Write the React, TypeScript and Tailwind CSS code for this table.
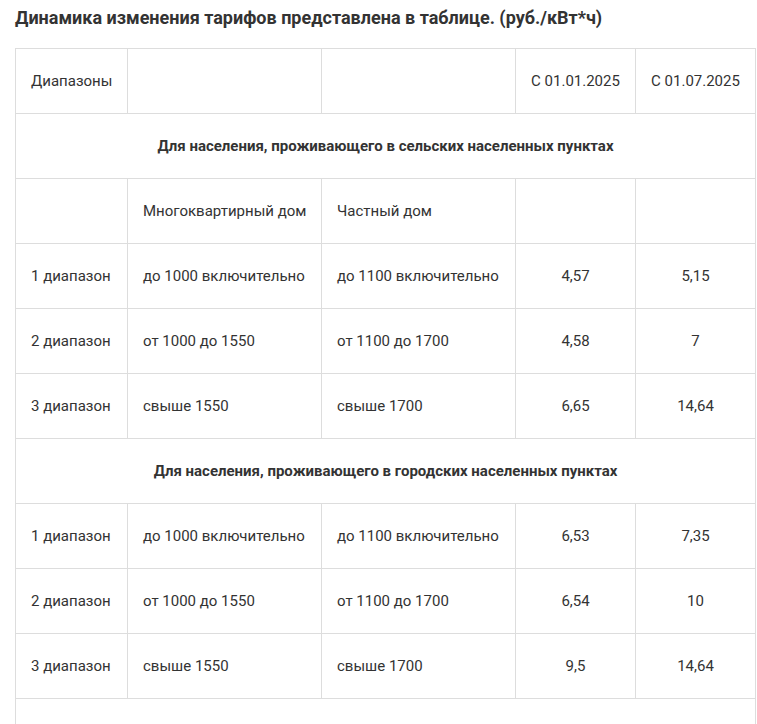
const rural = [
  ["1 диапазон", "до 1000 включительно", "до 1100 включительно", "4,57", "5,15"],
  ["2 диапазон", "от 1000 до 1550", "от 1100 до 1700", "4,58", "7"],
  ["3 диапазон", "свыше 1550", "свыше 1700", "6,65", "14,64"],
];

const urban = [
  ["1 диапазон", "до 1000 включительно", "до 1100 включительно", "6,53", "7,35"],
  ["2 диапазон", "от 1000 до 1550", "от 1100 до 1700", "6,54", "10"],
  ["3 диапазон", "свыше 1550", "свыше 1700", "9,5", "14,64"],
];

const td = "border border-[#dddddd] px-[15px] align-middle whitespace-nowrap";

function Row({ cells }: { cells: string[] }) {
  return (
    <tr className="h-[65px]">
      <td className={td}>{cells[0]}</td>
      <td className={td}>{cells[1]}</td>
      <td className={td}>{cells[2]}</td>
      <td className={`${td} text-center`}>{cells[3]}</td>
      <td className={`${td} text-center`}>{cells[4]}</td>
    </tr>
  );
}

function Section({ title }: { title: string }) {
  return (
    <tr className="h-[65px]">
      <td colSpan={5} className={`${td} text-center font-bold`}>
        {title}
      </td>
    </tr>
  );
}

export default function App() {
  return (
    <div
      className="min-h-screen bg-white px-[15px] pt-[6px] text-[#333333]"
      style={{ fontFamily: "Roboto, 'Liberation Sans', sans-serif" }}
    >
      <h3 className="text-[18px] font-bold leading-[24px] mb-[18px] whitespace-nowrap">
        Динамика изменения тарифов представлена в таблице. (руб./кВт*ч)
      </h3>

      <table className="w-[740px] border-collapse table-fixed text-[15px] leading-[20px]">
        <colgroup>
          <col className="w-[112px]" />
          <col className="w-[194px]" />
          <col className="w-[194px]" />
          <col className="w-[120px]" />
          <col className="w-[120px]" />
        </colgroup>
        <tbody>
          <Row cells={["Диапазоны", "", "", "С 01.01.2025", "С 01.07.2025"]} />
          <Section title="Для населения, проживающего в сельских населенных пунктах" />
          <Row cells={["", "Многоквартирный дом", "Частный дом", "", ""]} />
          {rural.map((r) => (
            <Row key={"r" + r[0]} cells={r} />
          ))}
          <Section title="Для населения, проживающего в городских населенных пунктах" />
          {urban.map((r) => (
            <Row key={"u" + r[0]} cells={r} />
          ))}
          <tr className="h-[65px]">
            <td colSpan={5} className={td}></td>
          </tr>
        </tbody>
      </table>
    </div>
  );
}
